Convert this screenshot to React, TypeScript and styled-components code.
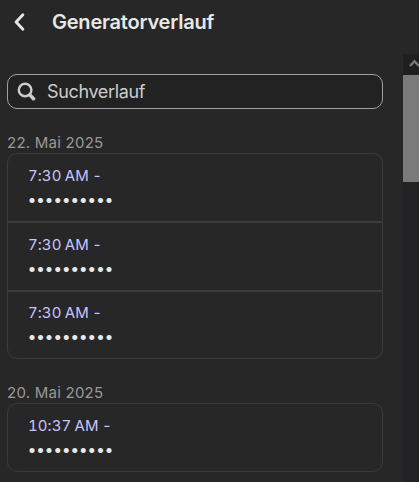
import React from "react";
import styled, { createGlobalStyle } from "styled-components";

const GlobalStyle = createGlobalStyle`
  * { box-sizing: border-box; }
  body {
    margin: 0;
    background: #272727;
    font-family: Inter, "Liberation Sans", sans-serif;
    overflow: hidden;
  }
`;

const Page = styled.div`
  display: flex;
  flex-direction: column;
  height: 100vh;
  overflow: hidden;
`;

const Header = styled.header`
  display: flex;
  align-items: center;
  flex: 0 0 54px;
  padding: 0 13px 10px;
`;

const BackButton = styled.button`
  display: flex;
  width: 12px;
  height: 20px;
  margin-right: 27px;
  padding: 0;
  border: 0;
  background: none;
`;

const Title = styled.h1`
  margin: 0;
  color: #e8e8e8;
  font-size: 20px;
  font-weight: 600;
  line-height: 28px;
  letter-spacing: -0.22px;
`;

const Body = styled.div`
  display: flex;
  flex: 1;
  min-height: 0;
`;

const Content = styled.main`
  flex: 1;
  min-width: 0;
  padding: 20px 20px 0 7px;
  overflow: hidden;
`;

const SearchField = styled.label`
  display: flex;
  align-items: center;
  height: 35px;
  padding-left: 9px;
  border: 1px solid #a0a0a0;
  border-radius: 10px;
  background: #222222;
`;

const SearchInput = styled.input`
  flex: 1;
  min-width: 0;
  margin-left: 11px;
  padding: 0;
  border: 0;
  outline: 0;
  background: none;
  font: 400 18px/24px Inter, "Liberation Sans", sans-serif;
  letter-spacing: -0.35px;
  &::placeholder { color: #cccccc; opacity: 1; }
`;

const Section = styled.section`
  margin-top: 24px;
`;

const DateHeading = styled.h2`
  margin: 0;
  color: #999999;
  font-size: 15px;
  font-weight: 400;
  line-height: 20px;
  letter-spacing: 0.24px;
`;

const EntryList = styled.ul`
  margin: 0;
  padding: 0;
  border: 1px solid #3b3b3b;
  border-radius: 10px;
  list-style: none;
`;

const Entry = styled.li`
  height: 67px;
  padding: 11px 20px 0;
  & + & { height: 69px; border-top: 2px solid #3b3b3b; }
  & + &:last-child { height: 68px; padding-top: 10px; }
`;

const Time = styled.div`
  color: #cbc3ff;
  font-size: 15px;
  line-height: 22px;
  letter-spacing: 0.05px;
  word-spacing: -0.7px;
  font-variant-numeric: tabular-nums;
`;

const Password = styled.div`
  margin-left: -0.5px;
  color: #e8e8e8;
  font-size: 16px;
  line-height: 24px;
  letter-spacing: -0.45px;
`;

const ScrollTrack = styled.div`
  flex: 0 0 16px;
  min-width: 0;
  overflow: hidden;
  background: #222224;
`;

const ScrollUp = styled.div`
  display: flex;
  height: 21px;
  padding: 5px 0 0 6px;
  background: #1f1f20;
  overflow: hidden;

  svg { flex: none; }
`;

const ScrollThumb = styled.div`
  height: 107px;
  background: #7a7a7a;
`;

const groups = [
  { date: "22. Mai 2025", times: ["7:30 AM -", "7:30 AM -", "7:30 AM -"] },
  { date: "20. Mai 2025", times: ["10:37 AM -"] },
];

export default function App() {
  return (
    <Page>
      <GlobalStyle />
      <Header>
        <BackButton aria-label="Zurück">
          <svg width="12" height="20" viewBox="0 0 12 20" fill="none">
            <path d="M9.9 2.8 3.1 10l6.8 7.2" stroke="#e3e3e3" strokeWidth="2.9" strokeLinecap="round" strokeLinejoin="round" />
          </svg>
        </BackButton>
        <Title>Generatorverlauf</Title>
      </Header>
      <Body>
        <Content>
          <SearchField>
            <svg width="19" height="19" viewBox="0 0 19 19" fill="none" stroke="#cccccc">
              <circle cx="8.1" cy="8" r="6.3" strokeWidth="2.4" />
              <path d="m12.9 12.9 3.6 3.8" strokeWidth="3.5" strokeLinecap="round" />
            </svg>
            <SearchInput placeholder="Suchverlauf" />
          </SearchField>
          {groups.map((group) => (
            <Section key={group.date}>
              <DateHeading>{group.date}</DateHeading>
              <EntryList>
                {group.times.map((time, i) => (
                  <Entry key={i}>
                    <Time>{time}</Time>
                    <Password>••••••••••</Password>
                  </Entry>
                ))}
              </EntryList>
            </Section>
          ))}
        </Content>
        <ScrollTrack>
          <ScrollUp>
            <svg width="12" height="10" viewBox="0 0 12 10" fill="none">
              <path d="m1 7 4.5-4.8L10 7" stroke="#7a7a7a" strokeWidth="2.4" />
            </svg>
          </ScrollUp>
          <ScrollThumb />
        </ScrollTrack>
      </Body>
    </Page>
  );
}
